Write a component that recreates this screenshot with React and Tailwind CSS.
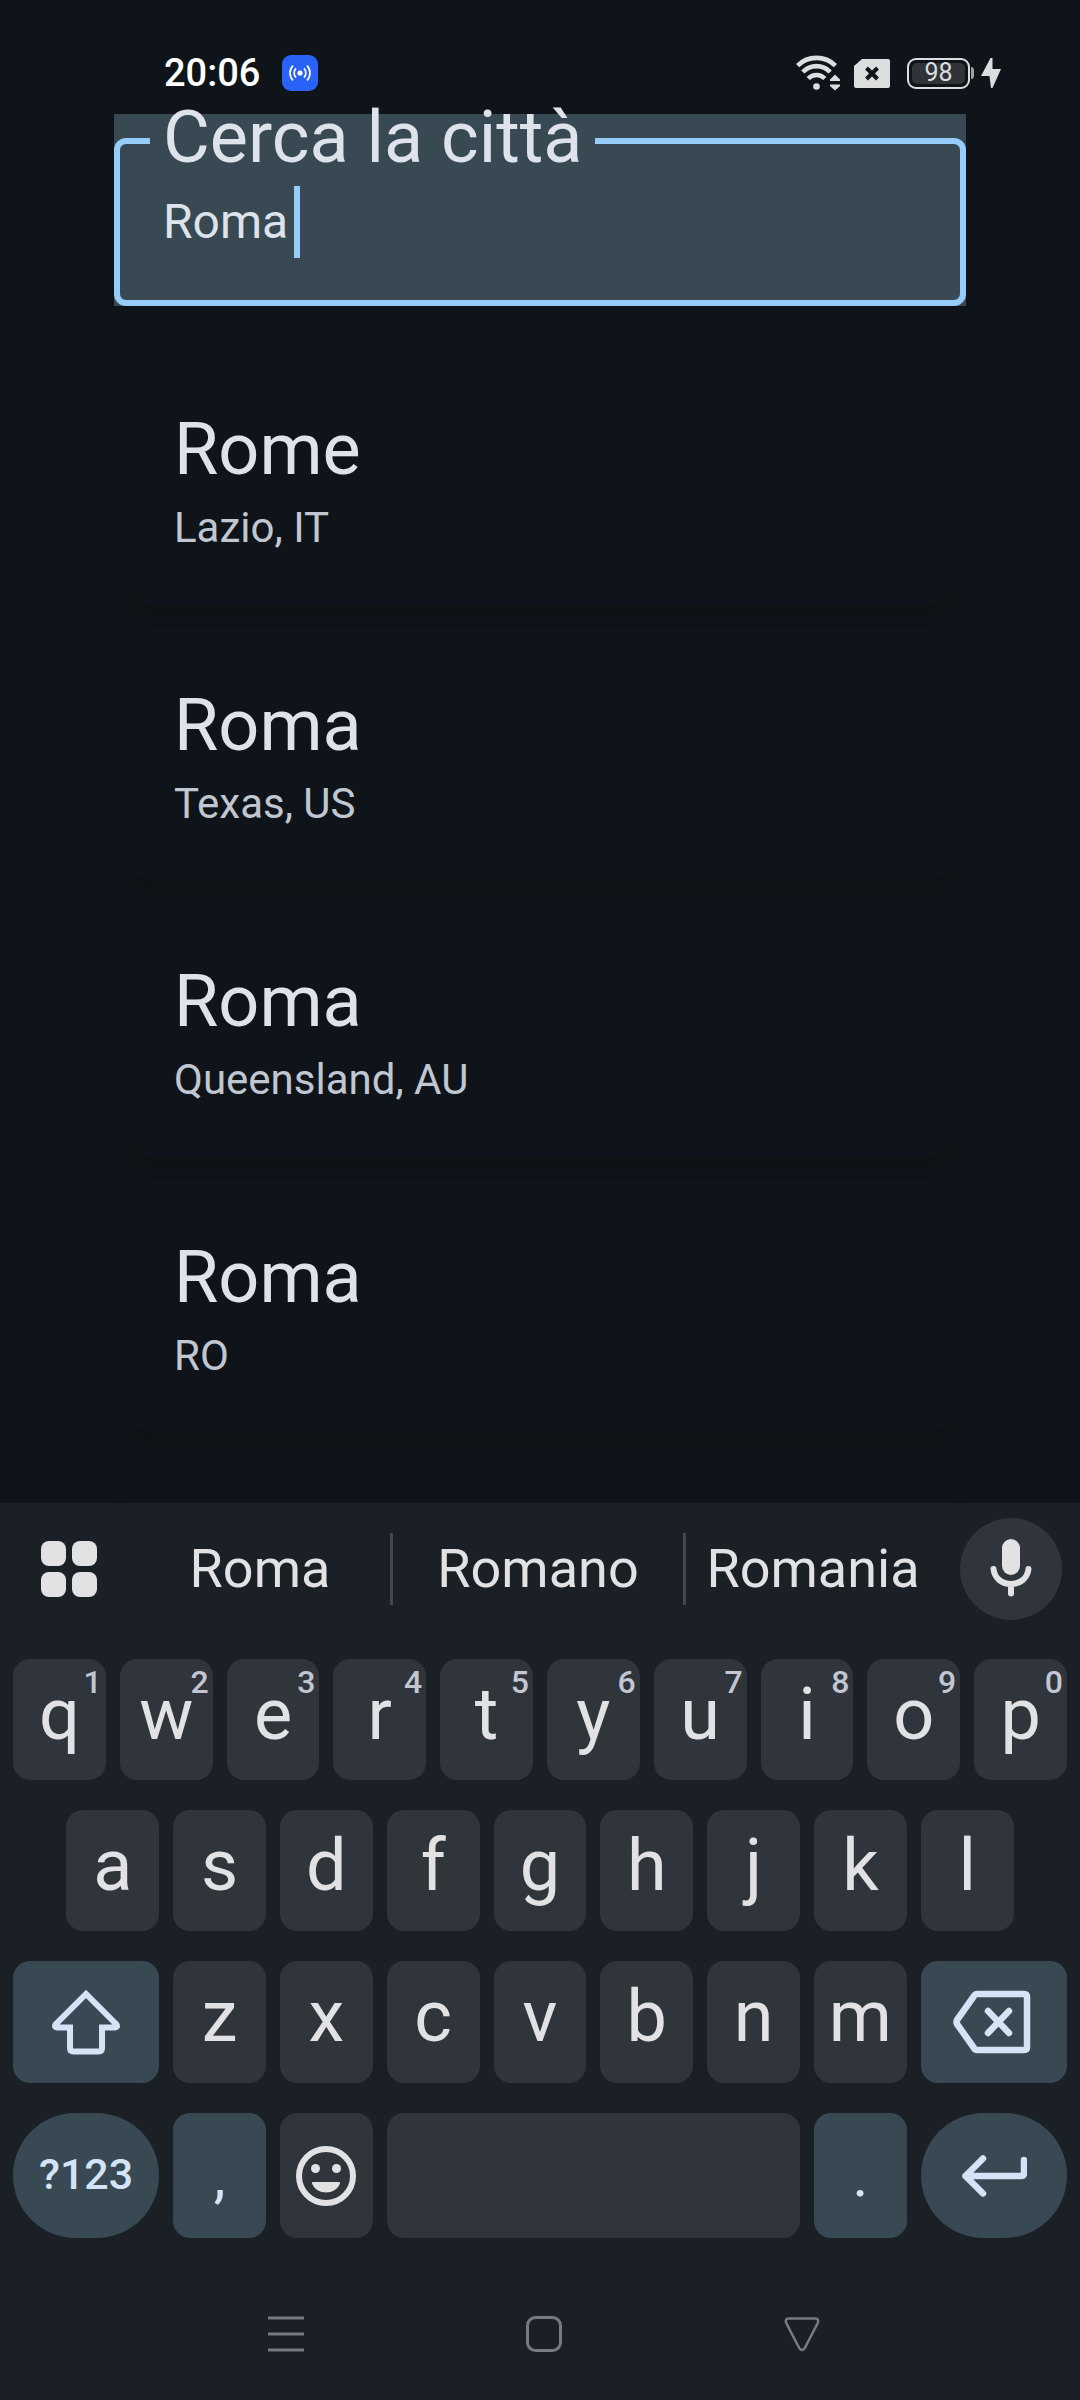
import React, { useState } from "react";

const CITIES = [
  { name: "Rome", place: "Lazio, IT" },
  { name: "Roma", place: "Texas, US" },
  { name: "Roma", place: "Queensland, AU" },
  { name: "Roma", place: "RO" },
];

const ROW_ONE = ["q", "w", "e", "r", "t", "y", "u", "i", "o", "p"];
const ROW_TWO = ["a", "s", "d", "f", "g", "h", "j", "k", "l"];
const ROW_THREE = ["z", "x", "c", "v", "b", "n", "m"];

function StatusBar() {
  return (
    <header className="flex h-[114px] shrink-0 items-center justify-between pt-8 pr-[79px] pl-[164px]">
      <div className="flex items-center gap-[22px]">
        <span className="text-[38px] leading-10 font-medium text-white">20:06</span>
        <svg className="size-9" viewBox="0 0 36 36" fill="none" stroke="#fff" strokeWidth="1.7" aria-label="Hotspot">
          <rect width="36" height="36" rx="9" fill="#2962f6" stroke="none" />
          <circle cx="18" cy="18" r="2.6" fill="#fff" stroke="none" />
          <path d="M14 13.4a6.6 6.6 0 0 0 0 9.2M22 13.4a6.6 6.6 0 0 1 0 9.2M11 10.6a10.6 10.6 0 0 0 0 14.8M25 10.6a10.6 10.6 0 0 1 0 14.8" />
        </svg>
      </div>
      <div className="flex items-center text-[#dcdddf]">
        <svg className="mr-3.5 h-9 w-11" viewBox="0 0 44 36" fill="none" stroke="currentColor" strokeWidth="4.6" aria-label="Wi-Fi">
          <path d="M1.6 10.600a27 27 0 0 1 37.8 0M6.8 17a19 19 0 0 1 27.4 0M12.2 23.500a11.5 11.5 0 0 1 16.6 0" />
          <circle cx="20.5" cy="31.500" r="3.3" fill="currentColor" stroke="none" />
          <path d="M32 26.500 39 18l7 8.500v2H32z" fill="#0f141b" stroke="none" />
          <path d="M34 26v-1.500l5-5 5 5V26zM34 29.500h10V31l-5 4.500-5-4.500z" fill="currentColor" stroke="none" />
        </svg>
        <svg className="mr-[17px] h-[29px] w-9" viewBox="0 0 36 29" aria-label="No SIM">
          <path d="M8 0h26a2 2 0 0 1 2 2v25a2 2 0 0 1-2 2H2a2 2 0 0 1-2-2V7z" fill="currentColor" />
          <path d="m12.500 9 11 11m0-11-11 11" stroke="#0f141b" strokeWidth="4" />
        </svg>
        <div className="flex h-[31px] w-[63px] items-center justify-center rounded-[9px] border-2 border-[#dcdddf] p-[3px]">
          <span className="flex h-full w-full items-center justify-center rounded-[5px] bg-[#303438] text-[25px] leading-6 text-[#dcdddf]">98</span>
        </div>
        <span className="mr-[7px] ml-px h-3 w-[3px] rounded-r-sm bg-[#9fa1a3]" />
        <svg className="h-[30px] w-5" viewBox="0 0 20 30" aria-label="Charging">
          <path d="M9.500 0 0 18h8.500L10 30h1.500L20 11h-8.500V0z" fill="currentColor" />
        </svg>
      </div>
    </header>
  );
}

function SearchField({ value, onChange }) {
  return (
    <div className="mx-[114px] shrink-0 bg-[#384953]">
      <fieldset className="-mt-3 rounded-xl border-[6px] border-[#95cdf8] pr-[30px] pb-[42px] pl-[30px]">
        <legend className="px-[13px] pb-1.5 text-[72px] leading-[72px] text-[#dee3eb]">
          <label htmlFor="city">Cerca la città</label>
        </legend>
        <div className="relative mt-1.5 ml-[13px] text-[48px] leading-[72px] text-[#dee3eb]">
          <input
            id="city"
            type="text"
            value={value}
            onChange={(event) => onChange(event.target.value)}
            className="block h-[72px] w-full bg-transparent caret-transparent outline-none"
          />
          <div className="pointer-events-none absolute inset-0 flex gap-1.5" aria-hidden="true">
            <span className="invisible whitespace-pre">{value}</span>
            <span className="h-full w-1.5 bg-[#95cdf8]" />
          </div>
        </div>
      </fieldset>
    </div>
  );
}

function CityCard({ city }) {
  return (
    <li className="min-h-[252px] shrink-0 rounded-[28px] bg-[#0f141b] shadow-[0_8px_12px_rgba(14,18,14,0.7)]">
      {city && (
        <button type="button" className="block w-full p-12 text-left">
          <span className="block text-[72px] leading-[96px] text-[#dee3eb]">{city.name}</span>
          <span className="block text-[42px] leading-[60px] text-[#c1c7d0]">{city.place}</span>
        </button>
      )}
    </li>
  );
}

function Suggestion({ children }) {
  return (
    <button type="button" className="min-w-0 text-center text-[54px] leading-[72px] text-[#e2e2e5]">
      {children}
    </button>
  );
}

function SuggestionStrip() {
  return (
    <div className="flex h-[132px] items-center pr-[18px] pl-[41px]">
      <button type="button" aria-label="Menu" className="mr-[33px] grid size-14 grid-cols-2 gap-1.5">
        <span className="rounded-lg bg-[#e2e2e5]" />
        <span className="rounded-lg bg-[#e2e2e5]" />
        <span className="rounded-lg bg-[#e2e2e5]" />
        <span className="rounded-lg bg-[#e2e2e5]" />
      </button>
      <div className="mr-5 grid flex-1 grid-cols-[260fr_3px_290fr_3px_254fr]">
        <Suggestion>Roma</Suggestion>
        <span className="bg-[#44474e]" />
        <Suggestion>Romano</Suggestion>
        <span className="bg-[#44474e]" />
        <Suggestion>Romania</Suggestion>
      </div>
      <button type="button" aria-label="Voice input" className="size-[102px] rounded-full bg-[#30343b]">
        <svg viewBox="0 0 102 102" fill="none" stroke="#e2e2e5" strokeWidth="6" strokeLinecap="round">
          <rect x="42" y="21" width="18" height="36" rx="9" fill="#e2e2e5" stroke="none" />
          <path d="M33.500 51c1 9 8 15 17.500 15s16.500-6 17.500-15M51 67v8.500" />
        </svg>
      </button>
    </div>
  );
}

function LetterKey({ letter, hint, first }) {
  return (
    <button
      type="button"
      className={
        "relative col-span-2 mx-[7px] rounded-[17px] bg-[#30343b] pb-2.5 text-center text-[72px] leading-[72px] text-[#e2e2e5]" +
        (first ? " col-start-2" : "")
      }
    >
      {letter}
      {hint && (
        <span className="absolute top-[7px] right-1 text-[32px] leading-8 font-medium text-[#c1c6d2]">{hint}</span>
      )}
    </button>
  );
}

function Keyboard() {
  const row = "grid grid-cols-[repeat(20,minmax(0,1fr))]";
  return (
    <section aria-label="Keyboard" className="shrink-0 bg-[#1b1f26]">
      <SuggestionStrip />
      <div className="flex flex-col gap-[30px] px-1.5 pt-6">
        <div className={row + " h-[121px]"}>
          {ROW_ONE.map((letter, i) => (
            <LetterKey key={letter} letter={letter} hint={String((i + 1) % 10)} />
          ))}
        </div>
        <div className={row + " h-[121px]"}>
          {ROW_TWO.map((letter, i) => (
            <LetterKey key={letter} letter={letter} first={i === 0} />
          ))}
        </div>
        <div className={row + " h-[122px]"}>
          <button type="button" aria-label="Shift" className="col-span-3 mx-[7px] flex items-center justify-center rounded-[17px] bg-[#384953]">
            <svg className="h-[66px] w-[70px]" viewBox="0 0 70 66" fill="none" stroke="#d4e4f6" strokeWidth="6">
              <path d="M35 5 4.500 35.500q-1.500 3 1.500 3h13V59q0 3.500 3.500 3.500h25Q51 62.500 51 59V38.500h13q3 0 1.500-3z" strokeLinejoin="miter" />
            </svg>
          </button>
          {ROW_THREE.map((letter) => (
            <LetterKey key={letter} letter={letter} />
          ))}
          <button type="button" aria-label="Backspace" className="col-span-3 mx-[7px] flex items-center justify-center rounded-[17px] bg-[#384953]">
            <svg className="mr-1 h-[64px] w-[78px]" viewBox="0 0 78 64" fill="none" stroke="#d4e4f6" strokeWidth="6.500" strokeLinejoin="round" strokeLinecap="round">
              <path d="M24 4h47q3 0 3 3v50q0 3-3 3H24q-2 0-3-2L4 34q-1-2 0-4L21 6q1-2 3-2zM35 21l21 22M56 21 35 43" />
            </svg>
          </button>
        </div>
        <div className={row + " h-[125px]"}>
          <button type="button" className="col-span-3 mx-[7px] rounded-full bg-[#384953] pb-1 text-center text-[43px] leading-[60px] font-medium text-[#d4e4f6]">
            ?123
          </button>
          <button type="button" className="col-span-2 mx-[7px] rounded-[17px] bg-[#384953] text-center text-[60px] leading-[72px] text-[#d4e4f6]">
            ,
          </button>
          <button type="button" aria-label="Emoji" className="col-span-2 mx-[7px] flex items-center justify-center rounded-[17px] bg-[#30343b]">
            <svg className="size-[60px]" viewBox="0 0 60 60" fill="#e2e2e5">
              <circle cx="30" cy="30" r="27" fill="none" stroke="#e2e2e5" strokeWidth="6" />
              <circle cx="19.500" cy="22.500" r="4.500" />
              <circle cx="40.500" cy="22.500" r="4.500" />
              <path d="M17 36h26q1.500 0 1 1.500C41.500 43.500 36 46.500 30 46.500S18.500 43.500 16 37.500Q15.500 36 17 36z" />
            </svg>
          </button>
          <button type="button" aria-label="Space" className="col-span-8 mx-[7px] rounded-[17px] bg-[#30343b]" />
          <button type="button" className="col-span-2 mx-[7px] rounded-[17px] bg-[#384953] text-center text-[60px] leading-[72px] text-[#d4e4f6]">
            .
          </button>
          <button type="button" aria-label="Enter" className="col-span-3 mx-[7px] flex items-center justify-center rounded-full bg-[#384953]">
            <svg className="h-[44px] w-[66px]" viewBox="0 0 66 44" fill="none" stroke="#d4e4f6" strokeWidth="6.500" strokeLinejoin="round" strokeLinecap="round">
              <path d="M22 4.500 4.500 22 22 39.500M4.500 22H60q3 0 3-3V6" />
            </svg>
          </button>
        </div>
      </div>
      <nav className="flex h-[162px] items-center justify-center gap-[222px] pt-[30px] pl-2 text-[#777b7f]">
        <button type="button" aria-label="Recent apps">
          <svg className="size-9" viewBox="0 0 36 36" stroke="currentColor" strokeWidth="3">
            <path d="M0 2h36M0 18h36M0 34h36" />
          </svg>
        </button>
        <button type="button" aria-label="Home">
          <svg className="size-9" viewBox="0 0 36 36" fill="none" stroke="currentColor" strokeWidth="3">
            <rect x="1.500" y="1.500" width="33" height="33" rx="8" />
          </svg>
        </button>
        <button type="button" aria-label="Back">
          <svg className="size-9" viewBox="0 0 36 36" fill="none" stroke="currentColor" strokeWidth="2.500">
            <path d="M4.500 2.500h27q3.500.5 2.500 4L20.500 32.500q-2.500 3-5 0L2 6.500q-1-3.500 2.500-4z" />
          </svg>
        </button>
      </nav>
    </section>
  );
}

export default function App() {
  const [query, setQuery] = useState("Roma");
  return (
    <div className="flex h-screen flex-col overflow-hidden bg-[#0f141b] font-[Roboto,sans-serif]">
      <StatusBar />
      <SearchField value={query} onChange={setQuery} />
      <main className="min-h-0 flex-1 overflow-hidden px-[126px] pt-12">
        <ul className="flex flex-col gap-6">
          {CITIES.map((city, i) => (
            <CityCard key={i} city={city} />
          ))}
          <CityCard />
        </ul>
      </main>
      <Keyboard />
    </div>
  );
}
